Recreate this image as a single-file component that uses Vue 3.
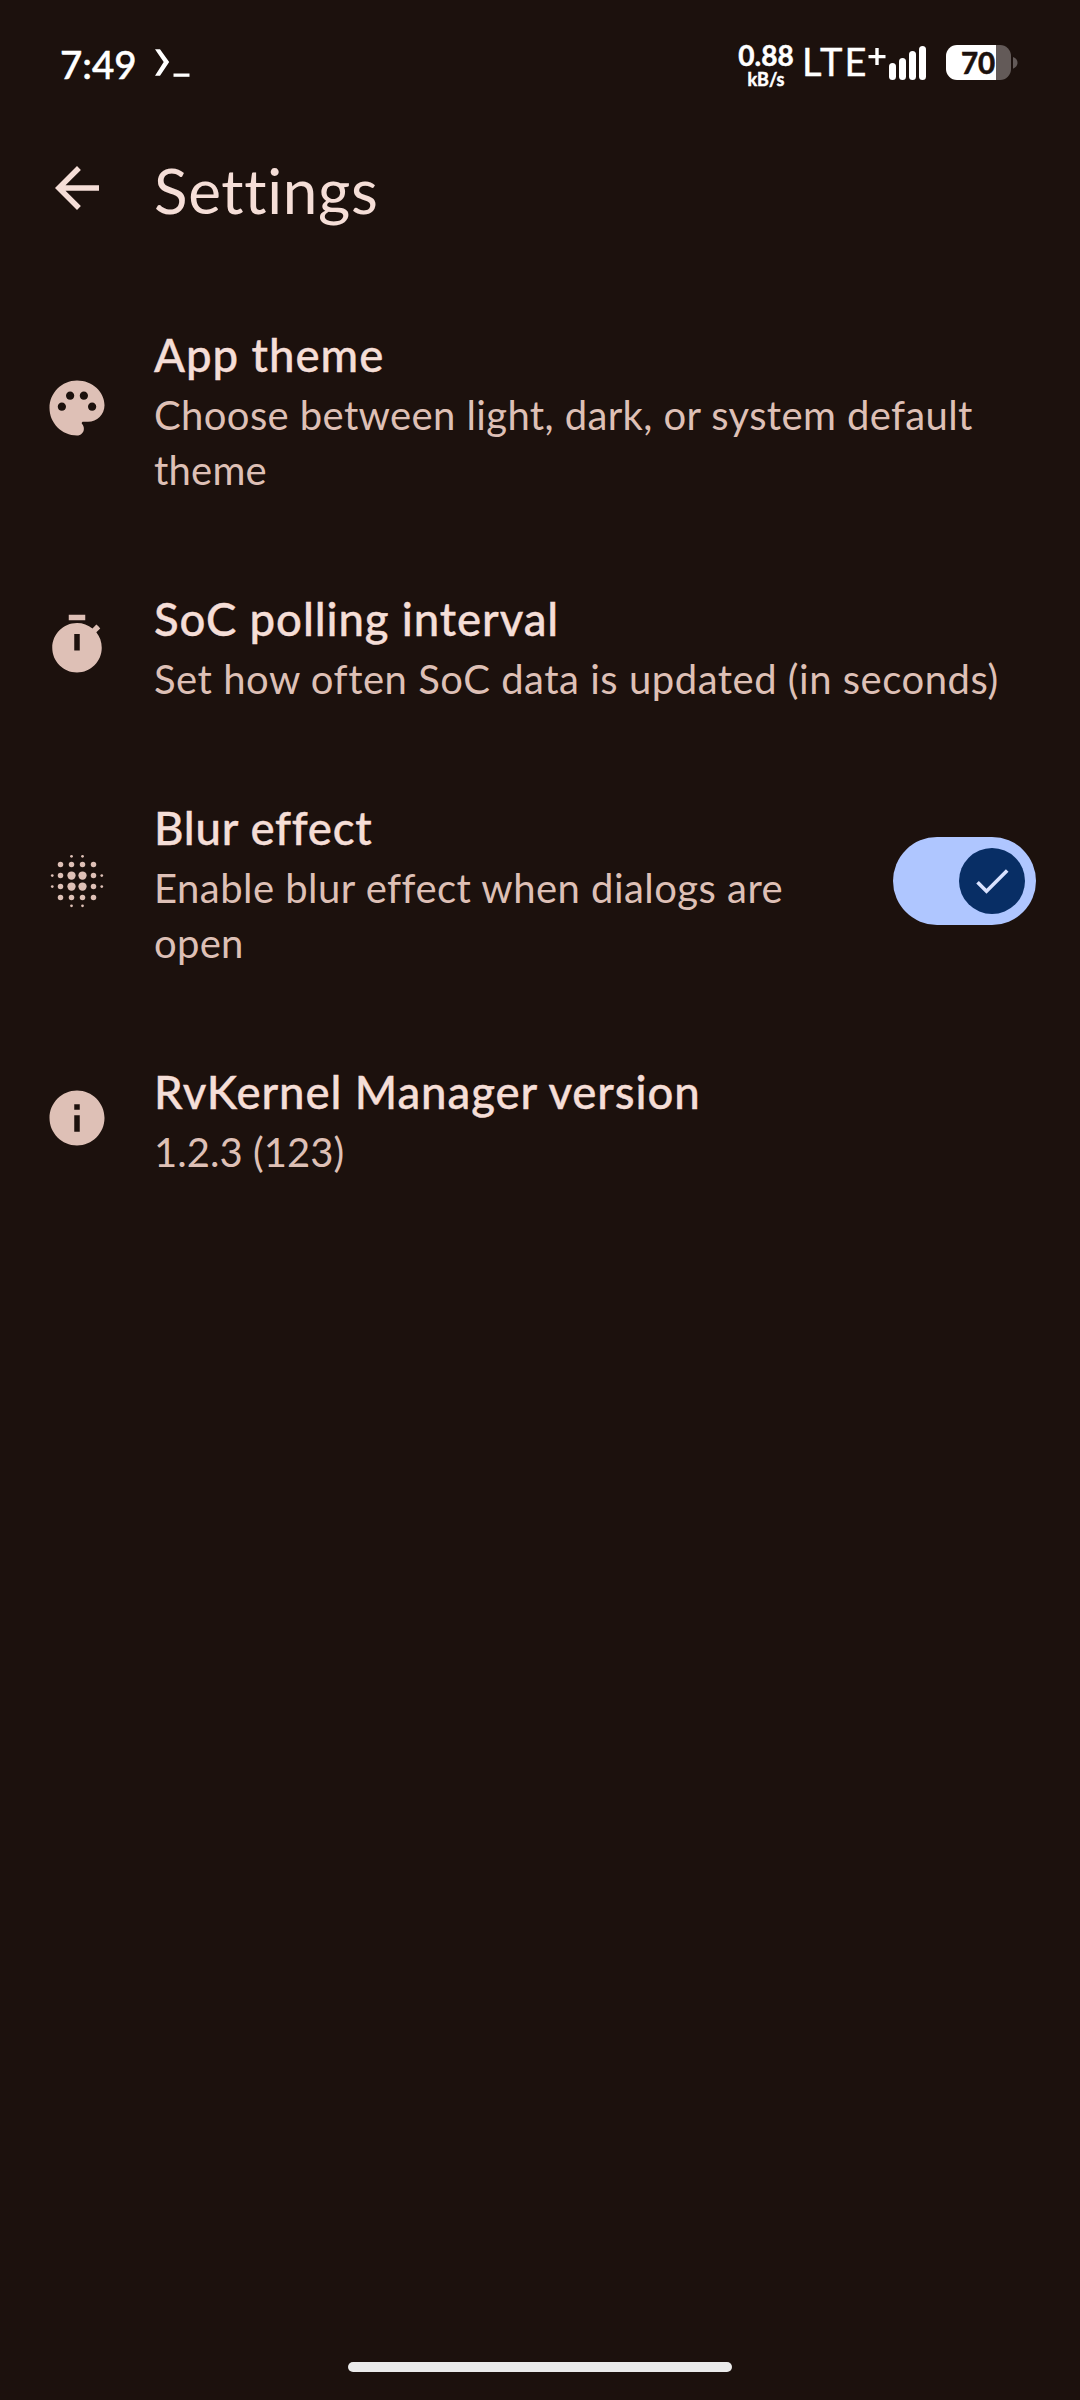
<script setup>
import { ref } from 'vue'

const blur = ref(true)

const items = [
  {
    id: 'theme', title: 'App theme', track: 1,
    lines: [
      { text: 'Choose between light, dark, or system default', track: 0.38 },
      { text: 'theme', track: 0.2 },
    ],
  },
  {
    id: 'polling', title: 'SoC polling interval', track: 0.9,
    lines: [{ text: 'Set how often SoC data is updated (in seconds)', track: 0.52 }],
  },
  {
    id: 'blur', title: 'Blur effect', track: 0.75, toggle: true,
    lines: [
      { text: 'Enable blur effect when dialogs are', track: 0.47 },
      { text: 'open', track: 0.3 },
    ],
  },
  {
    id: 'version', title: 'RvKernel Manager version', track: 0.93,
    lines: [{ text: '1.2.3 (123)', track: 0.05 }],
  },
]

// x, y, radius of every dot in the blur icon
const dots = [
  ...[6, 10, 14, 18].flatMap((x) => [6, 10, 14, 18].map((y) => [x, y, (x === 10 || x === 14) && (y === 10 || y === 14) ? 1.5 : 1])),
  ...[10, 14].flatMap((n) => [[n, 3, 0.5], [n, 21, 0.5], [3, n, 0.5], [21, n, 0.5]]),
]
</script>

<template>
  <div class="screen">
    <header class="status">
      <span class="clock">7:49</span>
      <svg class="prompt" width="38" height="32" viewBox="0 0 38 32">
        <path d="M2 1.200h5l9.200 12.900L7 27.700H2l8.700-13.600z" />
        <path d="M20.500 25.500h16v3.300h-16z" />
      </svg>
      <div class="speed">
        <span class="rate">0.88</span>
        <span class="unit">kB/s</span>
      </div>
      <span class="network">LTE</span>
      <svg class="plus" width="18" height="17" viewBox="0 0 18 17">
        <path d="M7.300 0h3.400v6.900h6.800v3.400h-6.800v6.700H7.300v-6.700H.5V6.900h6.800z" />
      </svg>
      <div class="signal"><i class="s1"></i><i class="s2"></i><i class="s3"></i><i class="s4"></i></div>
      <div class="battery"><span>70</span></div>
      <svg class="nub" width="5" height="12" viewBox="0 0 5 12">
        <path d="M0 0c3 1.200 4.500 3.200 4.500 5.800S3 10.500 0 11.700z" />
      </svg>
    </header>

    <div class="bar">
      <svg class="icon back" viewBox="0 0 24 24">
        <path d="M20 11H7.830l5.590-5.590L12 4l-8 8 8 8 1.410-1.410L7.830 13H20v-2z" />
      </svg>
      <h1>Settings</h1>
    </div>

    <main>
      <section v-for="item in items" :key="item.id" class="item">
        <svg class="icon" viewBox="0 0 24 24">
          <path
            v-if="item.id === 'theme'"
            d="M12 2C6.490 2 2 6.490 2 12s4.490 10 10 10c1.380 0 2.500-1.120 2.500-2.500 0-.610-.230-1.200-.640-1.670-.080-.100-.130-.210-.130-.330 0-.280.220-.500.500-.500H16c3.310 0 6-2.690 6-6 0-4.960-4.490-9-10-9zm5.500 11c-.830 0-1.500-.670-1.500-1.500s.670-1.500 1.500-1.500 1.500.670 1.500 1.500-.670 1.500-1.500 1.500zm-3-4c-.830 0-1.500-.670-1.500-1.500S13.670 6 14.500 6s1.500.670 1.500 1.500S15.330 9 14.500 9zM5 11.500c0-.830.670-1.500 1.500-1.500s1.500.670 1.500 1.500S7.330 13 6.500 13 5 12.330 5 11.500zm6-4c0 .830-.670 1.500-1.500 1.500S8 8.330 8 7.500 8.670 6 9.500 6s1.500.670 1.500 1.500z"
          />
          <path
            v-else-if="item.id === 'polling'"
            d="M9 1h6v2H9zM19.030 7.390l1.420-1.420c-.430-.510-.900-.990-1.410-1.410l-1.420 1.420C16.070 4.740 14.120 4 12 4c-4.970 0-9 4.030-9 9s4.020 9 9 9 9-4.030 9-9c0-2.120-.740-4.070-1.970-5.610zM13 14h-2V8h2v6z"
          />
          <g v-else-if="item.id === 'blur'">
            <circle v-for="(d, i) in dots" :key="i" :cx="d[0]" :cy="d[1]" :r="d[2]" />
          </g>
          <path
            v-else
            d="M12 2C6.480 2 2 6.480 2 12s4.480 10 10 10 10-4.480 10-10S17.520 2 12 2zm1 15h-2v-6h2v6zm0-8h-2V7h2v2z"
          />
        </svg>

        <div class="text">
          <h2 :style="{ letterSpacing: item.track + 'px' }">{{ item.title }}</h2>
          <p v-for="line in item.lines" :key="line.text" :style="{ letterSpacing: line.track + 'px' }">{{ line.text }}</p>
        </div>

        <button v-if="item.toggle" class="switch" role="switch" :aria-checked="blur" @click="blur = !blur">
          <span class="thumb" :class="{ off: !blur }">
            <svg viewBox="0 0 24 24"><path d="M9 16.170L4.830 12l-1.420 1.410L9 19 21 7l-1.410-1.410z" /></svg>
          </span>
        </button>
      </section>
    </main>

    <footer><div class="handle"></div></footer>
  </div>
</template>

<style>
body {
  background: #1c110d;
}
</style>

<style scoped>
.screen {
  display: flex;
  flex-direction: column;
  width: 1080px;
  height: 2400px;
  overflow: hidden;
  background: #1c110d;
  color: #f5ded7;
  font-family: Lato, "Noto Sans", sans-serif;
}

.status {
  display: flex;
  align-items: flex-start;
  height: 100px;
  padding-left: 60px;
  box-sizing: border-box;
  color: #fff;
  fill: #fff;
  white-space: nowrap;
}

.clock {
  width: 93px;
  margin-top: 41px;
  font-size: 38.5px;
  line-height: 47px;
  font-weight: 500;
  -webkit-text-stroke: 0.5px #fff;
}

.prompt {
  margin-top: 48px;
}

.speed {
  display: flex;
  flex-direction: column;
  align-items: center;
  width: 58px;
  margin: 41px 0 0 546px;
  font-weight: 700;
  -webkit-text-stroke: 0.5px #fff;
}

.rate {
  font-size: 28px;
  line-height: 28px;
}

.unit {
  font-size: 18px;
  line-height: 20px;
}

.network {
  width: 66px;
  margin: 39px 0 0 7px;
  font-size: 38px;
  line-height: 45px;
  letter-spacing: 2px;
  -webkit-text-stroke: 0.4px #fff;
}

.plus {
  margin: 48px 0 0 0;
}

.signal {
  display: flex;
  align-items: flex-end;
  gap: 3px;
  height: 34px;
  margin: 46px 0 0 3px;
}

.signal i {
  width: 7px;
  border-radius: 3.5px;
  background: #fff;
}

.s1 { height: 17px; }
.s2 { height: 22px; }
.s3 { height: 29px; }
.s4 { height: 34px; }

.battery {
  width: 65px;
  height: 35px;
  margin: 45px 2px 0 20px;
  box-sizing: border-box;
  padding-left: 15px;
  border-radius: 11px;
  background: linear-gradient(90deg, #fff 50px, #635a58 50px);
  color: #1c110d;
  font-size: 29.5px;
  line-height: 36px;
  font-weight: 700;
  -webkit-text-stroke: 0.6px #1c110d;
}

.nub {
  margin-top: 57px;
  fill: #635a58;
}

.bar {
  display: flex;
  align-items: center;
  height: 176px;
  padding-left: 44px;
}

.icon {
  flex: none;
  width: 66px;
  height: 66px;
  margin-right: 44px;
  fill: #dec0b6;
}

.back {
  fill: #f5ded7;
}

h1 {
  margin: 5px 0 0;
  font-size: 62px;
  line-height: 77px;
  font-weight: 400;
  letter-spacing: 0.7px;
}

.item {
  display: flex;
  align-items: center;
  padding: 44px;
}

.text {
  flex: 1;
  white-space: nowrap;
}

h2 {
  margin: 0;
  padding-top: 3px;
  font-size: 45.5px;
  line-height: 63px;
  font-weight: 500;
  -webkit-text-stroke: 0.4px #f5ded7;
}

p {
  margin: 0;
  padding-top: 3px;
  color: #dec0b6;
  font-size: 40px;
  line-height: 52px;
}

.switch {
  display: flex;
  align-items: center;
  justify-content: flex-end;
  width: 143px;
  height: 88px;
  padding: 0 11px;
  border: 0;
  border-radius: 44px;
  background: #afc6ff;
}

.thumb {
  display: flex;
  align-items: center;
  justify-content: center;
  width: 66px;
  height: 66px;
  border-radius: 50%;
  background: #082e65;
}

.thumb.off {
  margin-right: 55px;
}

.thumb svg {
  width: 44px;
  height: 44px;
  fill: #d9e2ff;
}

footer {
  display: flex;
  justify-content: center;
  margin-top: auto;
  padding-bottom: 28px;
}

.handle {
  width: 384px;
  height: 10px;
  border-radius: 5px;
  background: #ebebeb;
}
</style>
